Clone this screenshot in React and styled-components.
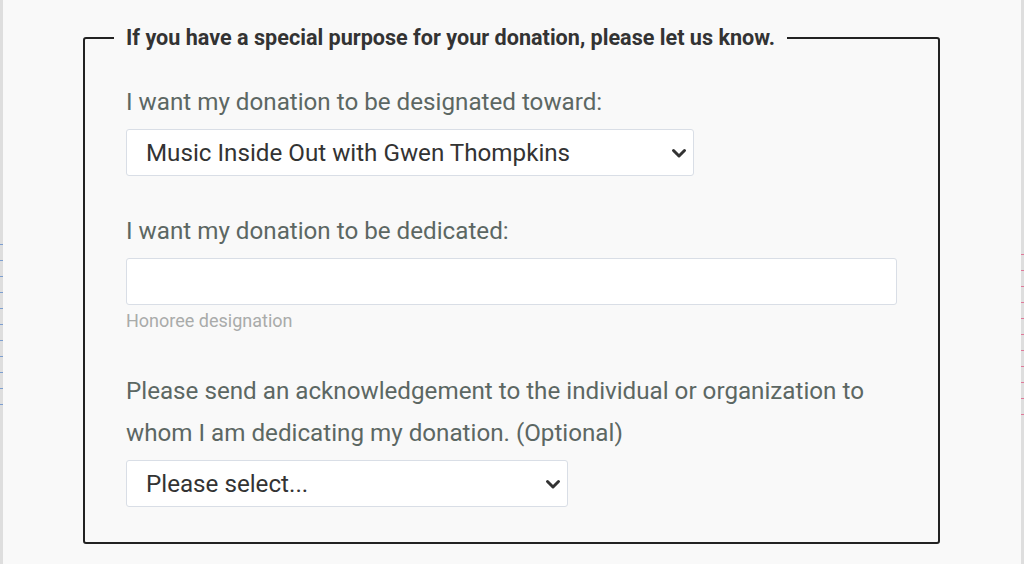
import React from "react";
import styled, { createGlobalStyle } from "styled-components";

const GlobalStyle = createGlobalStyle`
  html, body {
    margin: 0;
    padding: 0;
    background: #f9f9f9;
  }
  body {
    font-family: Roboto, "Liberation Sans", sans-serif;
  }
  * {
    box-sizing: border-box;
  }
`;

const chevron = encodeURIComponent(
  `<svg xmlns="http://www.w3.org/2000/svg" width="16" height="12" viewBox="0 0 16 12"><path d="M2.5 3.5 L8 9 L13.5 3.5" fill="none" stroke="#333" stroke-width="3" stroke-linecap="round" stroke-linejoin="round"/></svg>`
);

const Page = styled.div`
  position: relative;
  min-height: 564px;
  padding: 25px 85px 0 83px;
  background: #f9f9f9;
`;

const EdgeStrip = styled.div`
  position: absolute;
  top: 0;
  bottom: 0;
  width: 3px;
  ${(props) => (props.right ? "right: 0;" : "left: 0;")}
  background:
    repeating-linear-gradient(
      to bottom,
      transparent 0 14px,
      ${(props) => (props.right ? "#e07a9a" : "#7d9fd0")} 14px 15px,
      transparent 15px 16px
    ) 0 ${(props) => (props.right ? "240px" : "230px")} / 100% 190px no-repeat,
    #dedede;
`;

const Fieldset = styled.fieldset`
  margin: 0;
  width: 857px;
  padding: 30px 41px 35px 41px;
  border: 2px solid #222;
  border-radius: 3px;
`;

const Legend = styled.legend`
  margin-left: -12px;
  padding: 0 12px;
  font-size: 21.6px;
  line-height: 26px;
  font-weight: 700;
  color: #333;
`;

const Field = styled.div`
  display: flex;
  flex-direction: column;
  align-items: flex-start;
  margin-bottom: ${(props) => props.gap || "0"};
`;

const Label = styled.label`
  display: block;
  margin: 0 0 6px;
  font-size: 24.2px;
  line-height: 42px;
  color: #5c6763;
`;

const Select = styled.select`
  appearance: none;
  -webkit-appearance: none;
  width: ${(props) => props.w};
  height: 47px;
  padding: 0 40px 0 19px;
  font-family: Roboto, "Liberation Sans", sans-serif;
  font-size: 24.2px;
  color: #333;
  background: #fff url("data:image/svg+xml,${chevron}") no-repeat right 6px center;
  border: 1px solid #d9dee6;
  border-radius: 3px;
`;

const Input = styled.input`
  width: 771px;
  height: 47px;
  padding: 0 19px;
  font-family: Roboto, "Liberation Sans", sans-serif;
  font-size: 24px;
  background: #fff;
  border: 1px solid #d9dee6;
  border-radius: 3px;
`;

const Help = styled.span`
  margin-top: 5px;
  font-size: 18px;
  line-height: 22px;
  color: #a9abaa;
`;

export default function App() {
  return (
    <>
      <GlobalStyle />
      <Page>
        <EdgeStrip />
        <EdgeStrip right />
        <Fieldset>
          <Legend>
            If you have a special purpose for your donation, please let us know.
          </Legend>
          <Field gap="34px">
            <Label>I want my donation to be designated toward:</Label>
            <Select w="568px" defaultValue="mio">
              <option value="mio">Music Inside Out with Gwen Thompkins</option>
            </Select>
          </Field>
          <Field gap="38px">
            <Label>I want my donation to be dedicated:</Label>
            <Input type="text" />
            <Help>Honoree designation</Help>
          </Field>
          <Field>
            <Label>
              Please send an acknowledgement to the individual or organization to
              whom I am dedicating my donation. (Optional)
            </Label>
            <Select w="442px" defaultValue="">
              <option value="">Please select...</option>
            </Select>
          </Field>
        </Fieldset>
      </Page>
    </>
  );
}
